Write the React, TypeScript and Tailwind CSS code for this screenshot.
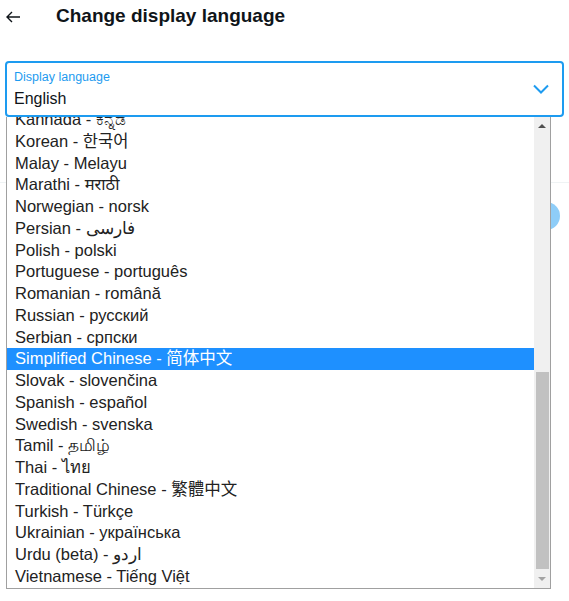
import React from 'react';

const languages = [
  'Kannada - ಕನ್ನಡ',
  'Korean - 한국어',
  'Malay - Melayu',
  'Marathi - मराठी',
  'Norwegian - norsk',
  'Persian - فارسی',
  'Polish - polski',
  'Portuguese - português',
  'Romanian - română',
  'Russian - русский',
  'Serbian - српски',
  'Simplified Chinese - 简体中文',
  'Slovak - slovenčina',
  'Spanish - español',
  'Swedish - svenska',
  'Tamil - தமிழ்',
  'Thai - ไทย',
  'Traditional Chinese - 繁體中文',
  'Turkish - Türkçe',
  'Ukrainian - українська',
  'Urdu (beta) - اردو',
  'Vietnamese - Tiếng Việt',
];

const selected = 'Simplified Chinese - 简体中文';

export default function App() {
  return (
    <div className="relative w-[569px] h-[601px] overflow-hidden bg-white font-['Liberation_Sans','Noto_Sans','Noto_Sans_CJK_SC',sans-serif] text-[#0f1419]">
      {/* Header */}
      <header className="flex items-center h-[33px] pl-[5px]">
        <svg viewBox="0 0 16 16" className="w-4 h-4" fill="none" stroke="#0f1419" strokeWidth="1.4">
          <path d="M15 8H2M7 3L2 8l5 5" />
        </svg>
        <h1 className="ml-[35px] text-[19px] font-bold">Change display language</h1>
      </header>

      {/* Select */}
      <div className="mx-[5px] mt-[28px] h-[56px] border-2 border-[#1d9bf0] rounded-[4px] flex items-center pr-[13px]">
        <div className="flex-1 pl-[7px] pt-[1px]">
          <div className="text-[12.5px] leading-4 text-[#1d9bf0]">Display language</div>
          <div className="text-[16px] leading-6 mt-[2px]">English</div>
        </div>
        <svg viewBox="0 0 16 10" className="w-4 h-[10px]" fill="none" stroke="#1d9bf0" strokeWidth="2">
          <path d="M1 1.5l7 7 7-7" />
        </svg>
      </div>

      {/* Content behind the open list */}
      <div className="mt-[65px] border-t border-[#eff3f4]">
        <div className="flex justify-end pr-[9px] pt-[19px]">
          <div className="w-7 h-7 rounded-full bg-[#8ecdf8]" />
        </div>
      </div>

      {/* Open dropdown list */}
      <div className="absolute left-[6px] top-[117px] w-[545px] h-[472px] border border-t-0 border-[#a0a0a0] bg-white flex">
        <div className="flex-1 overflow-hidden">
          <ul className="-mt-[8px]">
            {languages.map((lang) => (
              <li
                key={lang}
                className={
                  lang === selected
                    ? 'h-[21.75px] leading-[21.75px] pl-[8px] text-[16.5px] bg-[#1e90ff] text-white'
                    : 'h-[21.75px] leading-[21.75px] pl-[8px] text-[16.5px] text-[#222]'
                }
              >
                {lang}
              </li>
            ))}
          </ul>
        </div>

        {/* Scrollbar */}
        <div className="w-[16px] bg-[#f0f0f0] flex flex-col items-center">
          <div className="h-[17px] flex items-center justify-center">
            <div className="w-0 h-0 border-l-[4px] border-r-[4px] border-b-[4px] border-l-transparent border-r-transparent border-b-[#505050]" />
          </div>
          <div className="mt-[238px] w-[13px] h-[197px] bg-[#c1c1c1]" />
          <div className="flex-1 flex items-center justify-center">
            <div className="w-0 h-0 border-l-[4px] border-r-[4px] border-t-[4px] border-l-transparent border-r-transparent border-t-[#a3a3a3]" />
          </div>
        </div>
      </div>
    </div>
  );
}
